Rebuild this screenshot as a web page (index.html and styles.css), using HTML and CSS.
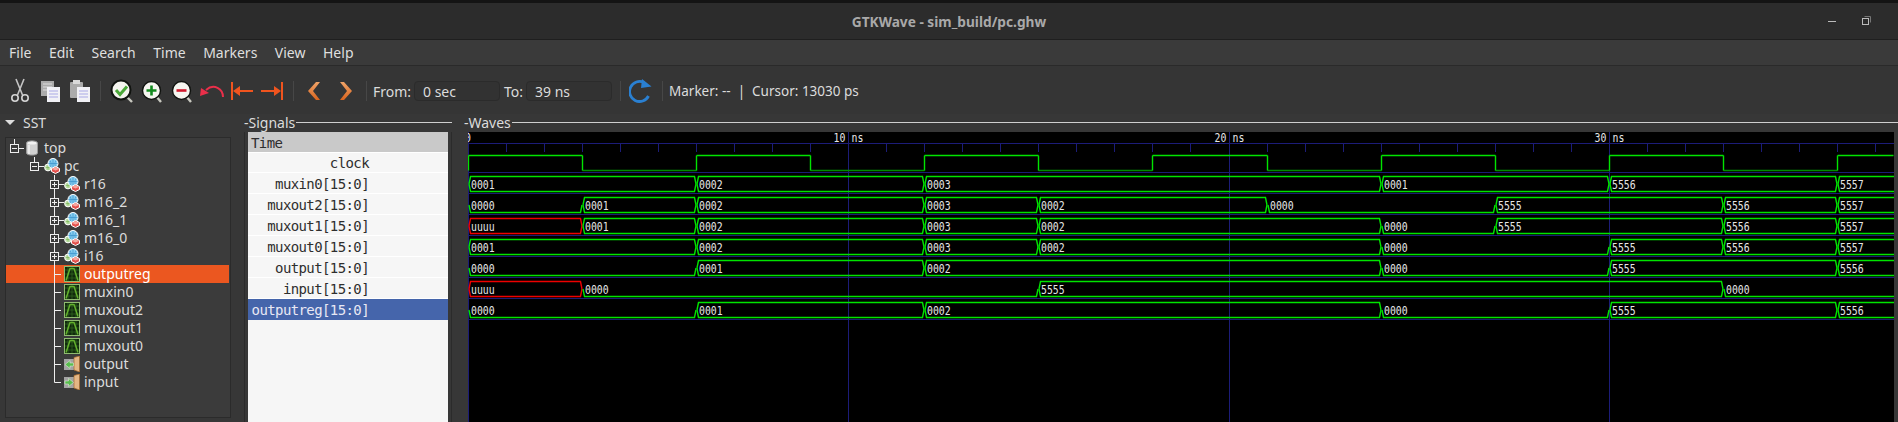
FILE: index.html
```html
<!DOCTYPE html>
<html lang="en">
<head>
    <meta charset="UTF-8">
    <meta name="viewport" content="width=device-width, initial-scale=1.0">
    <title>GTKWave - sim_build/pc.ghw</title>
    <link rel="stylesheet" href="styles.css">
</head>
<body>
    <!-- shared icons -->
    <svg class="defs" width="0" height="0">
        <defs>
            <linearGradient id="chevron" x1="0" y1="0" x2="0" y2="1">
                <stop offset="0" stop-color="#f0a468"/>
                <stop offset="1" stop-color="#d9641e"/>
            </linearGradient>
            <symbol id="g-plus" viewBox="0 0 18 18">
                <path d="M8.5 0V18M13 9.5H18" stroke="#eee" fill="none"/>
                <rect x="4.5" y="5.5" width="8" height="8" fill="#3a3a3a" stroke="#eee"/>
                <path d="M6 9.5H11M8.5 7V12" stroke="#eee"/>
            </symbol>
            <symbol id="g-minus" viewBox="0 0 18 18">
                <path d="M8.5 0V5M13 9.5H18" stroke="#eee" fill="none"/>
                <rect x="4.5" y="5.5" width="8" height="8" fill="#3a3a3a" stroke="#eee"/>
                <path d="M6 9.5H11" stroke="#eee"/>
            </symbol>
            <symbol id="g-tee" viewBox="0 0 18 18">
                <path d="M8.5 0V18M8.5 9.5H15" stroke="#eee" fill="none"/>
            </symbol>
            <symbol id="g-end" viewBox="0 0 18 18">
                <path d="M8.5 0V9.5H15" stroke="#eee" fill="none"/>
            </symbol>
            <symbol id="i-db" viewBox="0 0 16 16">
                <path d="M2.5 3C2.5 .2 13.5 .2 13.5 3V13C13.5 15.8 2.5 15.8 2.5 13Z" fill="#d2d2d2" stroke="#9a9a9a"/>
                <ellipse cx="8" cy="3" rx="4.5" ry="1.6" fill="#f2f2f2"/>
                <path d="M5 5V14" stroke="#f4f4f4" stroke-width="1.4"/>
            </symbol>
            <symbol id="i-mod" viewBox="0 0 16 16">
                <circle cx="4" cy="9.5" r="3.4" fill="#bfe0a8" stroke="#fff"/>
                <path d="M4 7.5V11.5M2 9.5H6" stroke="#6fb04c" stroke-width=".6"/>
                <circle cx="9" cy="5.5" r="5" fill="#86cdf0" stroke="#fff"/>
                <path d="M4.5 5.5H13.5M9 1V10M6 2.5C7.5 5 7.5 7 6 9M12 2.5C10.5 5 10.5 7 12 9" fill="none" stroke="#2f8cc8" stroke-width=".6"/>
                <path d="M7.5 10.5L11.5 8.5L15.5 10.5V13.5L11.5 15.5L7.5 13.5Z" fill="#e4524e" stroke="#fff"/>
                <path d="M8 11L11.5 9L15 11L11.5 12.5Z" fill="#f4a8a0"/>
            </symbol>
            <symbol id="i-sig" viewBox="0 0 16 16">
                <rect x=".5" y=".5" width="15" height="15" fill="#102a0c" stroke="#8fbb70"/>
                <path d="M4 1V15M8 1V15M12 1V15M1 4H15M1 8H15M1 12H15" stroke="#356a22" stroke-width=".7"/>
                <path d="M2 14.5L6 2.5H10L14 14.5" fill="none" stroke="#62b02c" stroke-width="1.5"/>
            </symbol>
            <symbol id="i-out" viewBox="0 0 16 16">
                <rect x="0" y="3" width="11" height="11" fill="#a4a4a4"/>
                <path d="M10 1.5L15.5 0V16L10 14Z" fill="#e4b685" stroke="#a86a2c" stroke-width=".7"/>
                <path d="M1 8.5L6 4.5V7H9.5V10H6V12.5Z" fill="#58bc4e" stroke="#e8f5e0" stroke-width=".5"/>
            </symbol>
            <symbol id="i-in" viewBox="0 0 16 16">
                <rect x="0" y="3" width="11" height="11" fill="#a4a4a4"/>
                <path d="M10 1.5L15.5 0V16L10 14Z" fill="#e4b685" stroke="#a86a2c" stroke-width=".7"/>
                <path d="M9.5 8.5L4.5 4.5V7H1V10H4.5V12.5Z" fill="#58bc4e" stroke="#e8f5e0" stroke-width=".5"/>
            </symbol>
        </defs>
    </svg>

    <header class="titlebar">
        <span class="title">GTKWave - sim_build/pc.ghw</span>
        <span class="win-min"></span>
        <svg class="win-max" width="10" height="10" viewBox="0 0 10 10">
            <path d="M2.5 .5H8.5V6.5" fill="none" stroke="#777"/>
            <rect x=".5" y="2.5" width="6" height="6" fill="none" stroke="#bbb"/>
        </svg>
    </header>

    <nav class="menubar">
        <span>File</span><span>Edit</span><span>Search</span><span>Time</span><span>Markers</span><span>View</span><span>Help</span>
    </nav>

    <div class="toolbar">
        <span class="tool">
            <svg width="24" height="26" viewBox="0 0 24 26">
                <path d="M8 1L14.5 17M16 1L9.5 17" fill="none" stroke="#c4c4c4" stroke-width="1.6"/>
                <circle cx="7" cy="20" r="3.2" fill="none" stroke="#d4d4d4" stroke-width="1.6"/>
                <circle cx="17" cy="20" r="3.2" fill="none" stroke="#d4d4d4" stroke-width="1.6"/>
            </svg>
        </span>
        <span class="tool">
            <svg width="24" height="24" viewBox="0 0 24 24">
                <rect x="3" y="2" width="13" height="15" fill="#ababab"/>
                <path d="M5 5H14M5 8H14M5 11H14" stroke="#dedede"/>
                <rect x="9" y="8" width="13" height="15" fill="#f1f1f6"/>
                <path d="M11 12H20M11 15H20M11 18H20" stroke="#a9a9e6"/>
            </svg>
        </span>
        <span class="tool">
            <svg width="24" height="24" viewBox="0 0 24 24">
                <rect x="2" y="3" width="13" height="16" rx="1" fill="#ababab"/>
                <rect x="5" y="1" width="7" height="4" fill="#dadada"/>
                <rect x="9" y="8" width="13" height="15" fill="#f1f1f6"/>
                <path d="M11 12H20M11 15H20M11 18H20" stroke="#a9a9e6"/>
            </svg>
        </span>
        <span class="sep sep-a"></span>
        <span class="tool">
            <svg width="26" height="26" viewBox="0 0 26 26">
                <path d="M17 18L23 24" stroke="#c9c9c0" stroke-width="2.4"/>
                <circle cx="12" cy="12" r="9.5" fill="#f4f4ee" stroke="#10130f" stroke-width="2"/>
                <path d="M7 12L11 16.5L18 8.5" fill="none" stroke="#4aa838" stroke-width="3"/>
            </svg>
        </span>
        <span class="tool">
            <svg width="26" height="26" viewBox="0 0 26 26">
                <path d="M17 18L22 24" stroke="#c9c9c0" stroke-width="2.4"/>
                <circle cx="12.5" cy="12.5" r="9" fill="#f6f6f0" stroke="#10130f" stroke-width="1.4"/>
                <path d="M7.5 12.5H17.5M12.5 7.5V17.5" stroke="#138a1e" stroke-width="2.6"/>
            </svg>
        </span>
        <span class="tool">
            <svg width="26" height="26" viewBox="0 0 26 26">
                <path d="M17 18L22 24" stroke="#c9c9c0" stroke-width="2.4"/>
                <circle cx="12.5" cy="12.5" r="9" fill="#f6f6f0" stroke="#10130f" stroke-width="1.4"/>
                <path d="M7.5 12.5H17.5" stroke="#d01a2c" stroke-width="2.6"/>
            </svg>
        </span>
        <span class="tool">
            <svg width="26" height="16" viewBox="0 0 26 16">
                <path d="M24 14C24 6 15 0 7 7" fill="none" stroke="#ea2f4a" stroke-width="2"/>
                <path d="M1 13L2 5L10 10Z" fill="#ea2f4a"/>
            </svg>
        </span>
        <span class="tool">
            <svg width="24" height="20" viewBox="0 0 24 20">
                <path d="M2 1V19" stroke="#f0541e" stroke-width="2"/>
                <path d="M6 10H23" stroke="#f0541e" stroke-width="2"/>
                <path d="M3 10L10 5V15Z" fill="#f0541e"/>
            </svg>
        </span>
        <span class="tool">
            <svg width="24" height="20" viewBox="0 0 24 20">
                <path d="M22 1V19" stroke="#f0541e" stroke-width="2"/>
                <path d="M1 10H18" stroke="#f0541e" stroke-width="2"/>
                <path d="M21 10L14 5V15Z" fill="#f0541e"/>
            </svg>
        </span>
        <span class="sep sep-b"></span>
        <span class="tool">
            <svg width="14" height="20" viewBox="0 0 14 20">
                <path d="M9 1H13L6 10L13 19H9L1 10Z" fill="url(#chevron)"/>
            </svg>
        </span>
        <span class="tool tool-next">
            <svg width="14" height="20" viewBox="0 0 14 20">
                <path d="M5 1H1L8 10L1 19H5L13 10Z" fill="url(#chevron)"/>
            </svg>
        </span>
        <span class="sep"></span>
        <label class="lbl lbl-from">From:</label>
        <input class="time-box box-from" value="0 sec">
        <label class="lbl lbl-to">To:</label>
        <input class="time-box box-to" value="39 ns">
        <span class="sep sep-c"></span>
        <span class="tool">
            <svg width="24" height="24" viewBox="0 0 24 24">
                <path d="M19.5 17A10 10 0 1 1 15 3.5" fill="none" stroke="#2a80d2" stroke-width="2.8"/>
                <path d="M13 0L22.5 7.5L12 9Z" fill="#2a80d2"/>
            </svg>
        </span>
        <span class="sep sep-c"></span>
        <span class="status">Marker: -- &nbsp;|&nbsp; Cursor: 13030 ps</span>
    </div>

    <main class="panes">
        <section class="sst">
            <div class="sst-head"><span class="arrow"></span>SST</div>
            <ul class="tree">
                <li class="node lvl1"><svg class="guide"><use href="#g-minus"/></svg><svg class="ico"><use href="#i-db"/></svg>top</li>
                <li class="node lvl2"><svg class="guide"><use href="#g-minus"/></svg><svg class="ico"><use href="#i-mod"/></svg>pc</li>
                <li class="node lvl3"><svg class="guide"><use href="#g-plus"/></svg><svg class="ico"><use href="#i-mod"/></svg>r16</li>
                <li class="node lvl3"><svg class="guide"><use href="#g-plus"/></svg><svg class="ico"><use href="#i-mod"/></svg>m16_2</li>
                <li class="node lvl3"><svg class="guide"><use href="#g-plus"/></svg><svg class="ico"><use href="#i-mod"/></svg>m16_1</li>
                <li class="node lvl3"><svg class="guide"><use href="#g-plus"/></svg><svg class="ico"><use href="#i-mod"/></svg>m16_0</li>
                <li class="node lvl3"><svg class="guide"><use href="#g-plus"/></svg><svg class="ico"><use href="#i-mod"/></svg>i16</li>
                <li class="node lvl3 picked"><svg class="guide"><use href="#g-tee"/></svg><svg class="ico"><use href="#i-sig"/></svg>outputreg</li>
                <li class="node lvl3"><svg class="guide"><use href="#g-tee"/></svg><svg class="ico"><use href="#i-sig"/></svg>muxin0</li>
                <li class="node lvl3"><svg class="guide"><use href="#g-tee"/></svg><svg class="ico"><use href="#i-sig"/></svg>muxout2</li>
                <li class="node lvl3"><svg class="guide"><use href="#g-tee"/></svg><svg class="ico"><use href="#i-sig"/></svg>muxout1</li>
                <li class="node lvl3"><svg class="guide"><use href="#g-tee"/></svg><svg class="ico"><use href="#i-sig"/></svg>muxout0</li>
                <li class="node lvl3"><svg class="guide"><use href="#g-tee"/></svg><svg class="ico"><use href="#i-out"/></svg>output</li>
                <li class="node lvl3"><svg class="guide"><use href="#g-end"/></svg><svg class="ico"><use href="#i-in"/></svg>input</li>
            </ul>
        </section>

        <section class="signals">
            <div class="frame-label">-Signals<span class="rule"></span></div>
            <div class="frame-body">
                <ul class="sig-list">
                    <li class="sig sig-time">Time</li>
                    <li class="sig sig-clock">clock</li>
                    <li class="sig">muxin0[15:0]</li>
                    <li class="sig">muxout2[15:0]</li>
                    <li class="sig">muxout1[15:0]</li>
                    <li class="sig">muxout0[15:0]</li>
                    <li class="sig">output[15:0]</li>
                    <li class="sig">input[15:0]</li>
                    <li class="sig sig-on">outputreg[15:0]</li>
                </ul>
            </div>
        </section>

        <section class="waves">
            <div class="frame-label">-Waves<span class="rule"></span></div>
            <svg id="waveCanvas" class="wave-canvas" width="1426" height="290"></svg>
        </section>
    </main>

    <script src="waves.js"></script>
</body>
</html>
```

FILE: styles.css
```css
* { box-sizing: border-box; }
html, body { margin: 0; height: 422px; overflow: hidden; }
body { background: #373737; color: #dcdcdc; font-family: "Noto Sans", sans-serif; font-size: 14px; border-top: 3px solid #141414; }
ul { list-style: none; margin: 0; padding: 0; }
.defs { position: absolute; }

.titlebar { height: 37px; background: #2c2c2c; border-bottom: 1px solid #1f1f1f; display: flex; align-items: center; justify-content: flex-end; padding-right: 26px; position: relative; }
.title { position: absolute; left: 0; right: 0; text-align: center; font-weight: bold; font-size: 13.7px; color: #a9a9a9; }
.win-min { width: 8px; height: 1px; background: #bbb; margin-right: 26px; }

.menubar { height: 26px; background: #3a3a3a; border-bottom: 1px solid #2a2a2a; display: flex; align-items: center; padding-left: 9px; gap: 17.5px; color: #dfdfdf; }

.toolbar { height: 48px; padding-top: 2px; background: #353535; display: flex; align-items: center; padding-left: 5px; }
.tool { width: 30px; height: 30px; display: flex; align-items: center; justify-content: center; }
.tool-next { margin-left: 2px; }
.sep { width: 1px; height: 20px; background: #474747; margin: 0 5px; }
.sep-a { margin-right: 6px; }
.sep-b { margin: 0 5px 0 6px; }
.sep-c { margin: 0 5px 0 6px; }
.lbl { margin-left: 1px; width: 41px; color: #dcdcdc; }
.lbl-to { width: 22px; margin-left: 4px; }
.time-box { height: 20px; background: #323232; border: 1px solid #2b2b2b; border-radius: 4px; color: #dcdcdc; font: 14px "Noto Sans", sans-serif; padding: 0 8px; outline: none; }
.box-from { width: 86px; }
.box-to { width: 86px; margin-right: 2px; }
.status { margin-left: 1px; font-size: 13.5px; }

.panes { display: grid; grid-template-columns: 244px 220px 1fr; height: 308px; }

.sst { padding-left: 5px; }
.sst-head { height: 23px; display: flex; align-items: center; gap: 8px; padding-bottom: 7px; }
.arrow { width: 0; height: 0; border: 5px solid transparent; border-top: 5px solid #ddd; border-bottom: 0; }
.tree { width: 226px; height: 281px; background: #3b3b3b; border: 1px solid #2b2b2b; padding-top: 1px; }
.node { height: 18px; display: flex; align-items: center; line-height: 18px; }
.lvl2 { padding-left: 20px; }
.lvl3 { padding-left: 40px; }
.guide { width: 18px; height: 18px; flex: none; }
.ico { width: 16px; height: 16px; flex: none; margin-right: 4px; }
.picked { background: #eb5720; margin-right: 1px; color: #fff; }

.frame-label { height: 18px; padding-bottom: 1px; display: flex; align-items: center; gap: 1px; font-size: 14px; }
.rule { flex: 1; height: 1px; background: #cfcfcf; }
.signals { width: 208px; }
.frame-body { height: 290px; border-left: 1px solid #2b2b2b; border-right: 1px solid #2b2b2b; padding: 0 3px; }
.sig-list { height: 100%; background: #f6f6f6; font-family: "DejaVu Sans Mono", monospace; font-size: 14px; letter-spacing: -0.6px; color: #2e2e2e; }
.sig { height: 21px; line-height: 22px; text-align: right; padding: 0 79px 0 3px; border-bottom: 1px solid #fff; }
.sig-time { text-align: left; background: #c9c9c9; }
.sig-clock { height: 20px; line-height: 20px; }
.sig-on { background: #4565ab; color: #e8e8f4; border-bottom: 0; }

.wave-canvas { display: block; background: #000; margin-left: 4px; }
.wave-canvas text { font-family: "DejaVu Sans Mono", monospace; font-size: 11.4px; fill: #e6e6e6; }
```

FILE: waves.js
```js
// draws the ruler and the traces into the wave canvas
const NS = 38.05;
const svg = document.getElementById('waveCanvas');
const GREEN = '#00e400', DARK = '#009000', RED = '#ee0000', NAVY = '#1c1c78';

const buses = [
    [[0, '0001'], [6, '0002'], [12, '0003'], [24, '0001'], [30, '5556'], [36, '5557']],
    [[0, '0000'], [3, '0001'], [6, '0002'], [12, '0003'], [15, '0002'], [21, '0000'], [27, '5555'], [33, '5556'], [36, '5557']],
    [[0, 'uuuu'], [3, '0001'], [6, '0002'], [12, '0003'], [15, '0002'], [24, '0000'], [27, '5555'], [33, '5556'], [36, '5557']],
    [[0, '0001'], [6, '0002'], [12, '0003'], [15, '0002'], [24, '0000'], [30, '5555'], [33, '5556'], [36, '5557']],
    [[0, '0000'], [6, '0001'], [12, '0002'], [24, '0000'], [30, '5555'], [36, '5556']],
    [[0, 'uuuu'], [3, '0000'], [15, '5555'], [33, '0000']],
    [[0, '0000'], [6, '0001'], [12, '0002'], [24, '0000'], [30, '5555'], [36, '5556']]
];

let html = '';

function X(t) { return Math.floor(NS * t) + 0.5; }

function line(d, color) {
    const width = color === NAVY ? 1 : 1.4;
    html += '<path d="' + d + '" fill="none" stroke="' + color + '" stroke-width="' + width + '"/>';
}

function label(x, y, str) {
    html += '<text x="' + x + '" y="' + y + '" textLength="' + (str.length * 5.92) +
        '" lengthAdjust="spacingAndGlyphs">' + str + '</text>';
}

// major grid and ruler
line('M0 11.5H1426', NAVY);
for (let t = 0; t < 38; t++) {
    if (t % 10 === 0) line('M' + X(t) + ' 0V290', NAVY);
    else line('M' + X(t) + ' 11V20', NAVY);
}
label(-3, 9.5, '0');
[10, 20, 30].forEach(function(t) {
    label(X(t) - 15, 9.5, String(t));
    label(X(t) + 3, 9.5, 'ns');
});

// row separators
for (let i = 0; i < 8; i++) line('M0 ' + (40.5 + i * 21) + 'H1426', NAVY);

// clock
let hi = true;
for (let t = 0; t < 38; t += 3) {
    const x1 = X(t), x2 = Math.min(X(t + 3), 1425.5);
    const y = hi ? 23.5 : 38.5;
    line('M' + x1 + ' ' + y + 'H' + x2, hi ? GREEN : DARK);
    if (t > 0) line('M' + x1 + ' 23.5V38.5', GREEN);
    hi = !hi;
}
line('M0.5 23.5V38.5', GREEN);

// bus rows
buses.forEach(function(bus, i) {
    const top = 44.5 + i * 21, bot = top + 15, mid = top + 7.5;
    bus.forEach(function(seg, j) {
        const x1 = X(seg[0]);
        const last = j === bus.length - 1;
        const x2 = last ? 1426 : X(bus[j + 1][0]);
        const color = seg[1] === 'uuuu' ? RED : GREEN;
        const a = x1 + 2, b = last ? x2 : x2 - 2;
        const tailL = 'M' + (x1 + 0.5) + ' ' + mid;
        const tailR = last ? '' : ' L' + (x2 - 0.5) + ' ' + mid;
        if (seg[1] !== '0000') {
            line(tailL + ' L' + a + ' ' + top + ' H' + b + tailR, color);
        }
        line(tailL + ' L' + a + ' ' + bot + ' H' + b + tailR, color);
        label(x1 + 2.5, mid + 4.5, seg[1]);
    });
});

svg.innerHTML = html;
```
